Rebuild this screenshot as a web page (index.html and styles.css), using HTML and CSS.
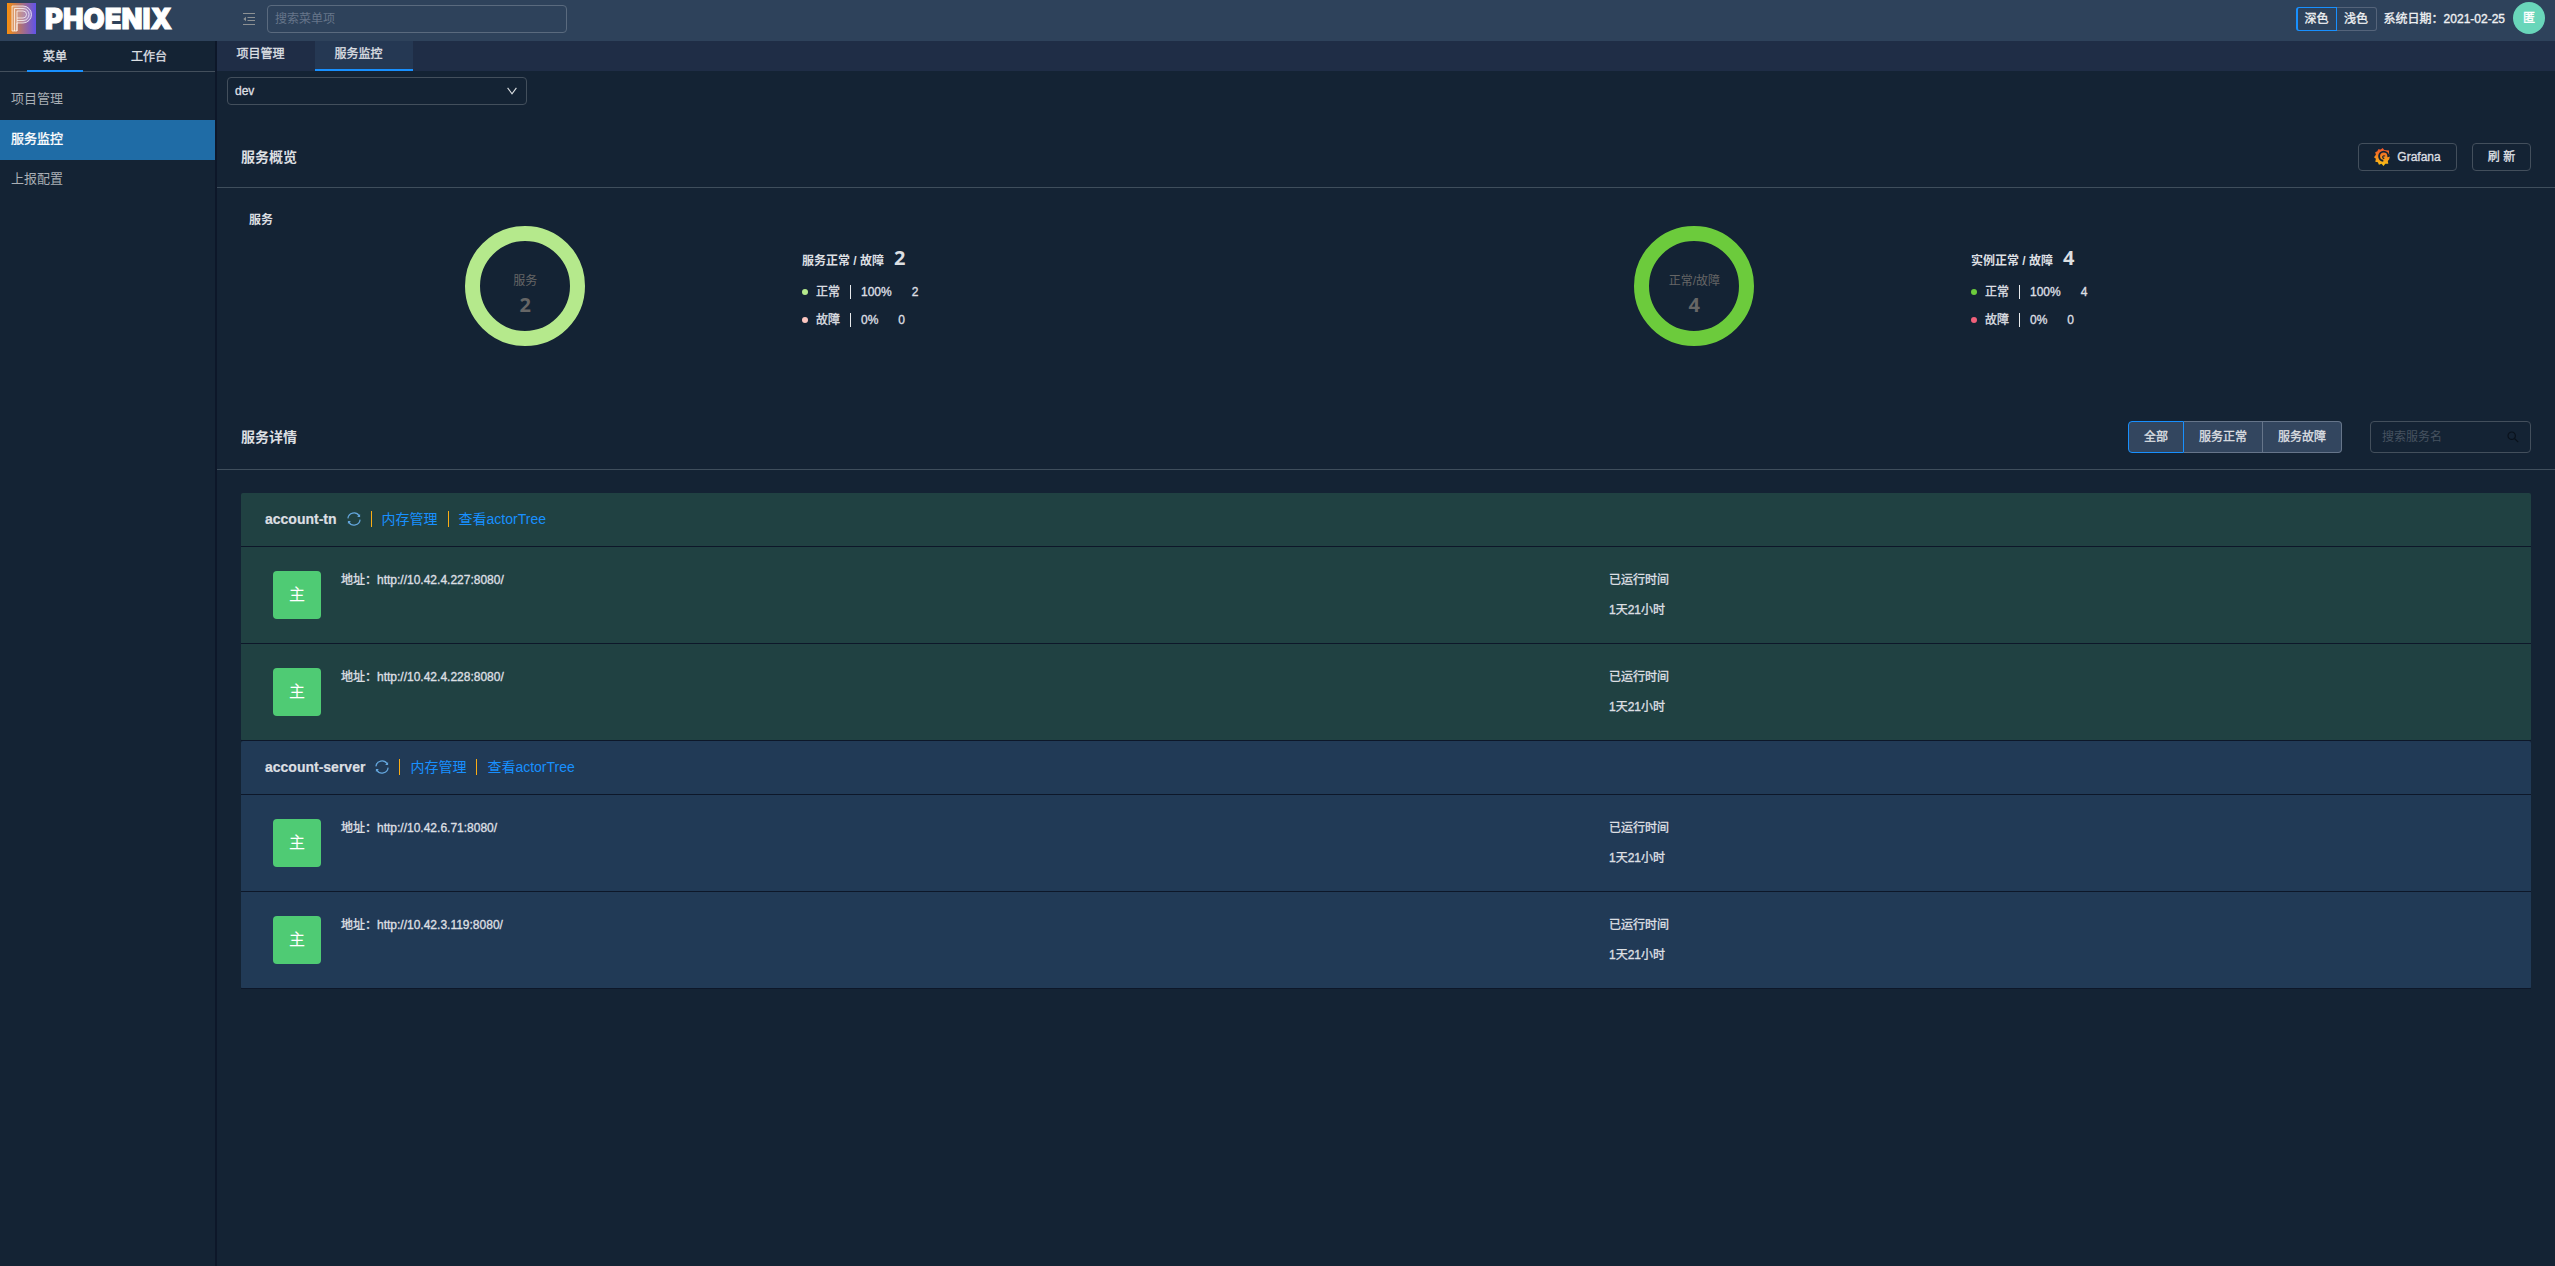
FILE: index.html
```html
<!DOCTYPE html>
<html lang="zh-CN">
<head>
<meta charset="utf-8">
<title>PHOENIX</title>
<link rel="stylesheet" href="styles.css">
</head>
<body>
<header class="header">
  <div class="brand">
    <svg class="logo" width="29" height="31" viewBox="0 0 29 31"><defs><linearGradient id="lg" x1="0" x2="1"><stop offset="0" stop-color="#f98f0c"/><stop offset="1" stop-color="#6052ea"/></linearGradient></defs><rect width="29" height="31" fill="url(#lg)"/><g fill="none" stroke="#fff" stroke-opacity=".72"><path d="M5 28V3h11a8 8 0 0 1 0 17h-6v8z" fill="#fff" fill-opacity=".22"/><path d="M7.500 28V5.500h8.500a5.700 5.700 0 0 1 0 12H10V28"/><path d="M10 17.500V8h6a3.400 3.400 0 0 1 0 7h-6"/></g></svg>
    <svg class="wordmark" width="136" height="41" viewBox="0 0 136 41"><text x="1" y="29" textLength="127" lengthAdjust="spacingAndGlyphs">PHOENIX</text></svg>
  </div>
  <svg class="fold" width="12" height="12" viewBox="0 0 12 12"><path d="M0 .5h12M4.500 4.500H12M4.500 7.500H12M0 11.500h12" stroke="currentColor"/><path d="M3 3.800v4.400L.3 6z" fill="currentColor"/></svg>
  <div class="field menu-search">搜索菜单项</div>
  <div class="header-right">
    <div class="theme"><span class="theme-btn on">深色</span><span class="theme-btn">浅色</span></div>
    <span class="date">系统日期：2021-02-25</span>
    <span class="user">匿</span>
  </div>
</header>
<div class="body">
  <aside class="side">
    <div class="side-tabs"><span class="side-tab on">菜单</span><span class="side-tab">工作台</span></div>
    <nav class="menu">
      <a class="item">项目管理</a>
      <a class="item on">服务监控</a>
      <a class="item">上报配置</a>
    </nav>
  </aside>
  <main class="main">
    <div class="tabs"><span class="tab">项目管理</span><span class="tab on">服务监控</span></div>
    <div class="field select"><span>dev</span><svg width="10" height="8" viewBox="0 0 10 8"><path d="M.6.8 5 6.800 9.400.8" fill="none" stroke="currentColor" stroke-width="1.100"/></svg></div>
    <section class="bar overview-bar">
      <h2>服务概览</h2>
      <div class="actions">
        <span class="btn grafana"><svg width="17" height="18" viewBox="0 0 17 18"><defs><linearGradient id="gg" x1="0" y1="0" x2="0" y2="1"><stop offset="0" stop-color="#f0502a"/><stop offset="1" stop-color="#fbc714"/></linearGradient></defs><path d="M15.900 8.500 14.900 5.300 15 2.600 12.200 2.200 10.300 2 8.600 0 6.800 1.600 4.200 1.200 3.400 3.200 1.200 4.200 1.900 6.800 0 9.200 1.900 10.800 1.300 13.800 3.900 14.200 4.900 16.800 7.500 15.800 9.500 18 11.300 15.700 14.300 15.700 13.800 13 15.200 11.300z" fill="url(#gg)"/><path d="M16 7.600 14.300 8A4.600 4.600 0 1 0 9.300 12.800" fill="none" stroke="#142334" stroke-width="1.900"/><path d="M10.300 10.300a1.300 1.300 0 1 1 .7-2" fill="none" stroke="#142334" stroke-width="1.100"/></svg>Grafana</span>
        <span class="btn">刷 新</span>
      </div>
    </section>
    <section class="overview">
      <div class="stat">
        <h3>服务</h3>
        <div class="chart"><div class="ring light"><span>服务</span><b>2</b></div></div>
        <div class="legend">
          <div class="legend-head">服务正常 / 故障<b>2</b></div>
          <div class="legend-row"><i class="dot c-light"></i><span class="name">正常</span><span class="pct">100%</span><span>2</span></div>
          <div class="legend-row"><i class="dot c-pink"></i><span class="name">故障</span><span class="pct">0%</span><span>0</span></div>
        </div>
      </div>
      <div class="stat">
        <div class="chart"><div class="ring green"><span>正常/故障</span><b>4</b></div></div>
        <div class="legend">
          <div class="legend-head">实例正常 / 故障<b>4</b></div>
          <div class="legend-row"><i class="dot c-green"></i><span class="name">正常</span><span class="pct">100%</span><span>4</span></div>
          <div class="legend-row"><i class="dot c-red"></i><span class="name">故障</span><span class="pct">0%</span><span>0</span></div>
        </div>
      </div>
    </section>
    <section class="bar detail-bar">
      <h2>服务详情</h2>
      <div class="actions">
        <div class="filter"><span class="f on">全部</span><span class="f">服务正常</span><span class="f">服务故障</span></div>
        <div class="field svc-search"><span>搜索服务名</span><svg width="12" height="12" viewBox="0 0 12 12"><g fill="none" stroke="currentColor" stroke-width="1.200"><circle cx="4.700" cy="4.700" r="3.700"/><path d="m7.500 7.500 3.700 3.700"/></g></svg></div>
      </div>
    </section>
    <section class="list">
      <div class="group g-green">
        <div class="group-head"><b>account-tn</b><svg class="sync" width="14" height="14" viewBox="0 0 14 14"><path d="M.9 6.400A6.100 6.100 0 0 1 12.200 3.900M13.100 7.600A6.100 6.100 0 0 1 1.800 10.100" fill="none" stroke="currentColor" stroke-width="1.200"/><path d="M13.100 2v3h-3zM.9 12V9h3z" fill="currentColor"/></svg><i class="sep"></i><a>内存管理</a><i class="sep"></i><a>查看actorTree</a></div>
        <div class="row"><span class="role">主</span><span class="addr">地址：http://10.42.4.227:8080/</span><div class="uptime"><span>已运行时间</span><span>1天21小时</span></div></div>
        <div class="row"><span class="role">主</span><span class="addr">地址：http://10.42.4.228:8080/</span><div class="uptime"><span>已运行时间</span><span>1天21小时</span></div></div>
      </div>
      <div class="group g-blue">
        <div class="group-head"><b>account-server</b><svg class="sync" width="14" height="14" viewBox="0 0 14 14"><path d="M.9 6.400A6.100 6.100 0 0 1 12.200 3.900M13.100 7.600A6.100 6.100 0 0 1 1.800 10.100" fill="none" stroke="currentColor" stroke-width="1.200"/><path d="M13.100 2v3h-3zM.9 12V9h3z" fill="currentColor"/></svg><i class="sep"></i><a>内存管理</a><i class="sep"></i><a>查看actorTree</a></div>
        <div class="row"><span class="role">主</span><span class="addr">地址：http://10.42.6.71:8080/</span><div class="uptime"><span>已运行时间</span><span>1天21小时</span></div></div>
        <div class="row"><span class="role">主</span><span class="addr">地址：http://10.42.3.119:8080/</span><div class="uptime"><span>已运行时间</span><span>1天21小时</span></div></div>
      </div>
    </section>
  </main>
</div>
</body>
</html>
```
FILE: styles.css
```css
* { box-sizing: border-box; }
body {
  margin: 0;
  height: 1266px;
  overflow: hidden;
  display: flex;
  flex-direction: column;
  background: #142334;
  color: #dcdfe2;
  font: 400 12px/20px "Liberation Sans", "Noto Sans CJK SC", sans-serif;
}
h2, h3 { margin: 0; }
i { font-style: normal; }
svg { display: block; flex: none; }
.field {
  display: flex;
  align-items: center;
  justify-content: space-between;
  border: 1px solid #434f5c;
  border-radius: 4px;
}

.header {
  height: 41px;
  flex: none;
  display: flex;
  align-items: flex-start;
  background: #2e425b;
}
.brand { display: flex; gap: 8px; width: 243px; padding-left: 7px; }
.logo { margin-top: 3px; }
.wordmark text { font: 900 29px "Inter", sans-serif; fill: #fff; stroke: #fff; stroke-width: 1px; }
.fold { margin: 13px 12px 0 0; color: #8d9193; }
.menu-search { width: 300px; height: 28px; margin-top: 5px; padding: 0 7px; border-color: #5a6a7e; color: #66758a; }
.header-right { margin-left: auto; padding-right: 10px; display: flex; align-items: center; height: 37px; color: #eef0f2; }
.theme { display: flex; height: 24px; margin-right: 7px; }
.theme-btn { width: 40px; text-align: center; line-height: 22px; border: 1px solid #55647a; border-left: 0; border-radius: 0 3px 3px 0; }
.theme-btn.on { width: 41px; border: 1px solid #1890ff; border-left-width: 2px; border-radius: 3px 0 0 3px; }
.user { width: 32px; height: 32px; margin: -1px 0 0 8px; border-radius: 50%; background: #69d6ba; color: #fff; text-align: center; line-height: 32px; }

.body { flex: 1; display: flex; min-height: 0; }
.side { width: 217px; border-right: 2px solid #0d1729; }
.side-tabs { display: flex; height: 31px; padding-left: 27px; border-bottom: 1px solid #434f5c; }
.side-tab { height: 31px; padding: 0 16px; line-height: 32px; }
.side-tab + .side-tab { margin-left: 32px; }
.side-tab.on { border-bottom: 2px solid #1890ff; }
.menu { padding-top: 8px; }
.item { display: block; height: 40px; padding-left: 11px; font-size: 13px; line-height: 38px; color: #a9afb5; }
.item.on { background: #1f6ca6; color: #fff; }

.main { flex: 1; min-width: 0; }
.tabs { display: flex; height: 30px; background: #1f2d46; }
.tab { width: 98px; padding-left: 19.5px; line-height: 26px; }
.tab.on { background: #253853; border-bottom: 2px solid #1890ff; }
.select { width: 300px; height: 28px; margin: 6px 0 0 10px; padding: 0 9px 0 7px; }

.bar { display: flex; align-items: center; justify-content: space-between; padding: 0 24px; border-bottom: 1px solid #3f4e5c; }
.bar h2 { font-size: 14px; font-weight: 700; }
.actions { display: flex; }
.overview-bar { height: 61px; margin-top: 22px; }
.btn { width: 59px; height: 28px; display: flex; align-items: center; justify-content: center; border: 1px solid #434f5c; border-radius: 4px; }
.grafana { width: 99px; gap: 6px; margin-right: 15px; }

.overview { display: grid; grid-template-columns: 1fr 1fr; height: 216px; }
.stat { display: grid; grid-template-columns: 32px 553px 1fr; align-items: start; }
.stat h3 { grid-column: 1; grid-row: 1; width: 30px; margin: 22px 0 0 32px; font-size: 12px; }
.chart { grid-column: 2; grid-row: 1; display: flex; justify-content: center; padding: 38px .4px 0 0; }
.ring { width: 120px; height: 120px; border-radius: 50%; border: 15px solid; display: flex; flex-direction: column; align-items: center; padding-top: 30px; }
.ring span { color: #666; line-height: 20px; }
.ring b { color: #666; font: 700 20px/28px "Noto Sans", sans-serif; }
.light { border-color: #b5e98c; }
.green { border-color: #6ccb3c; }
.legend { grid-column: 3; grid-row: 1; padding-top: 56px; }
.legend-head { display: flex; height: 34px; align-items: center; font-weight: 700; line-height: 34px; }
.legend-head b { margin: -6px 0 0 10px; font: 700 20px/30px "Noto Sans", sans-serif; }
.legend-row { display: flex; align-items: center; height: 28px; }
.dot { width: 6px; height: 6px; border-radius: 50%; margin-right: 8px; }
.c-light { background: #b5e98c; }
.c-pink { background: #fcc6c0; }
.c-green { background: #6ccb3c; }
.c-red { background: #f0607a; }
.pct { margin: 0 20px 0 10px; padding-left: 10px; border-left: 1px solid #e8eaec; line-height: 14px; }

.detail-bar { height: 66px; }
.filter { display: flex; height: 32px; margin-right: 28px; }
.f { width: 79px; text-align: center; line-height: 30px; background: #33465f; border: 1px solid #66758a; border-left: 0; }
.f.on { width: 56px; border: 1px solid #1890ff; border-radius: 4px 0 0 4px; }
.f:last-child { border-radius: 0 4px 4px 0; }
.svc-search { width: 161px; height: 32px; padding: 0 11px; color: #465260; }
.svc-search svg { color: #0a121c; }

.list { padding: 23px 24px 0; }
.group { border-radius: 2px; }
.g-green { background: #204142; }
.g-blue { background: #213a56; }
.group-head { display: flex; align-items: center; gap: 10px; height: 54px; padding: 0 0 1px 24px; border-bottom: 1px solid #0d1729; font-size: 14px; }
.group-head b, .group-head a { margin-top: -1px; }
.group-head b { -webkit-text-stroke: .2px currentColor; }
.group-head a { color: #1890ff; }
.sync { color: #64a6dc; }
.sep { width: 1px; height: 16px; background: #faad14; }
.row { display: grid; grid-template-columns: 68px 1268px 1fr; align-items: start; height: 97px; padding: 24px 0 0 32px; border-bottom: 1px solid #0d1729; }
.role { width: 48px; height: 48px; border-radius: 4px; background: #4fcb74; color: #fff; text-align: center; font-size: 16px; line-height: 47px; }
.addr { line-height: 18px; }
.uptime { display: flex; flex-direction: column; gap: 12px; line-height: 18px; }
.addr, .date, .btn, .select span, .theme-btn, .side-tab, .tab, .item.on, .f, .legend-row, .uptime, .user { -webkit-text-stroke: .35px currentColor; }
```
